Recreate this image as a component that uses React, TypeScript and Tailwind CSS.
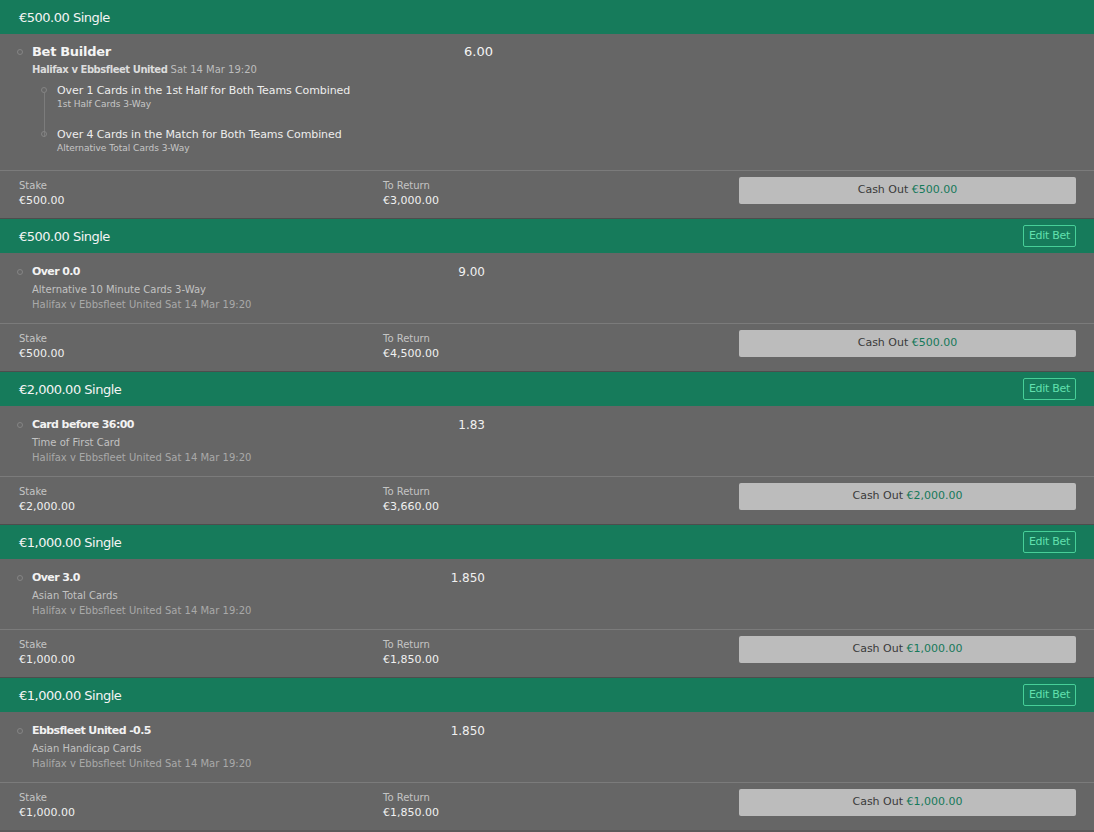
import type { ReactNode } from 'react';

type Bet = {
  stake: string;
  toReturn: string;
  cashOut: string;
  title: string;
  odds: string;
  market: string;
  edit?: boolean;
};

const bets: Bet[] = [
  { stake: '€500.00', toReturn: '€4,500.00', cashOut: '€500.00', title: 'Over 0.0', odds: '9.00', market: 'Alternative 10 Minute Cards 3-Way', edit: true },
  { stake: '€2,000.00', toReturn: '€3,660.00', cashOut: '€2,000.00', title: 'Card before 36:00', odds: '1.83', market: 'Time of First Card', edit: true },
  { stake: '€1,000.00', toReturn: '€1,850.00', cashOut: '€1,000.00', title: 'Over 3.0', odds: '1.850', market: 'Asian Total Cards', edit: true },
  { stake: '€1,000.00', toReturn: '€1,850.00', cashOut: '€1,000.00', title: 'Ebbsfleet United -0.5', odds: '1.850', market: 'Asian Handicap Cards', edit: true },
];

function Dot({ className = '' }: { className?: string }) {
  return <span className={`block h-[6px] w-[6px] rounded-full border border-[#858585] ${className}`} />;
}

function Header({ stake, edit }: { stake: string; edit?: boolean }) {
  return (
    <div className="flex h-[34px] items-center justify-between bg-[#167b5b] pl-[19px] pr-[18px]">
      <span className="pt-[1px] text-[13px] tracking-[-0.5px] text-[#f4f4f4]">{stake} Single</span>
      {edit && (
        <button className="h-[22px] rounded-[2px] border border-[#47cf98] px-[5px] text-[11px] tracking-[-0.3px] text-[#62e0ae]">
          Edit Bet
        </button>
      )}
    </div>
  );
}

function Footer({ stake, toReturn, cashOut }: { stake: string; toReturn: string; cashOut: string }) {
  return (
    <div className="flex h-[48px] items-start border-t border-[#7b7b7b] pl-[19px] pr-[18px] pt-[6px]">
      <div className="w-[364px] pt-[2px]">
        <p className="text-[10px] leading-[14px] text-[#c4c4c4]">Stake</p>
        <p className="text-[11px] leading-[15px] text-[#f0f0f0]">{stake}</p>
      </div>
      <div className="flex-1 pt-[2px]">
        <p className="text-[10px] leading-[14px] text-[#c4c4c4]">To Return</p>
        <p className="text-[11px] leading-[15px] text-[#f0f0f0]">{toReturn}</p>
      </div>
      <button className="h-[27px] w-[337px] rounded-[2px] bg-[#bcbcbc] text-[11px] text-[#3a3a3a]">
        Cash Out <span className="text-[#16795a]">{cashOut}</span>
      </button>
    </div>
  );
}

function Block({ children, first }: { children: ReactNode; first?: boolean }) {
  return <section className={`bg-[#666666] ${first ? '' : 'border-t border-[#4d4d4d]'}`}>{children}</section>;
}

function Leg({ title, market, className = '' }: { title: string; market: string; className?: string }) {
  return (
    <div className={`relative flex ${className}`}>
      <Dot className="mr-[10px] ml-[24px] mt-[4px] shrink-0" />
      <div>
        <p className="text-[11px] leading-[15px] tracking-[-0.1px] text-[#ededed]">{title}</p>
        <p className="text-[9px] leading-[13px] text-[#c6c6c6]">{market}</p>
      </div>
    </div>
  );
}

export default function App() {
  return (
    <div className="min-h-[832px] bg-[#5a5a5a] font-['DejaVu_Sans',sans-serif]">
      <Block first>
        <Header stake="€500.00" />
        <div className="h-[136px] pl-[17px] pt-[9px]">
          <div className="flex w-[476px] items-start">
            <Dot className="mt-[6px] mr-[9px] shrink-0" />
            <div className="flex-1">
              <p className="text-[13px] font-bold leading-[18px] tracking-[-0.3px] text-[#f4f4f4]">Bet Builder</p>
              <p className="mt-[2px] text-[10px] leading-[14px] text-[#d8d8d8]">
                <span className="font-bold tracking-[-0.45px] text-[#dcdcdc]">Halifax v Ebbsfleet United</span>{' '}
                <span className="text-[#bdbdbd]">Sat 14 Mar 19:20</span>
              </p>
            </div>
            <span className="text-[13px] leading-[18px] text-[#f4f4f4]">6.00</span>
          </div>
          <div className="relative mt-[6px]">
            <span className="absolute left-[27px] top-[10px] h-[44px] w-px bg-[#7c7c7c]" />
            <Leg title="Over 1 Cards in the 1st Half for Both Teams Combined" market="1st Half Cards 3-Way" />
            <Leg className="mt-[16px]" title="Over 4 Cards in the Match for Both Teams Combined" market="Alternative Total Cards 3-Way" />
          </div>
        </div>
        <Footer stake="€500.00" toReturn="€3,000.00" cashOut="€500.00" />
      </Block>
      {bets.map((b, i) => (
        <Block key={i}>
          <Header stake={b.stake} edit={b.edit} />
          <div className="h-[70px] pl-[17px] pt-[11px]">
            <div className="flex w-[468px] items-start">
              <Dot className="mt-[5px] mr-[9px] shrink-0" />
              <div className="flex-1">
                <p className="text-[11px] font-bold leading-[16px] tracking-[-0.6px] text-[#f2f2f2]">{b.title}</p>
                <p className="mt-[2px] text-[10px] leading-[15px] text-[#c2c2c2]">{b.market}</p>
                <p className="text-[10px] leading-[15px] text-[#a9a9a9]">Halifax v Ebbsfleet United Sat 14 Mar 19:20</p>
              </div>
              <span className="text-[12px] leading-[16px] text-[#f0f0f0]">{b.odds}</span>
            </div>
          </div>
          <Footer stake={b.stake} toReturn={b.toReturn} cashOut={b.cashOut} />
        </Block>
      ))}
    </div>
  );
}
